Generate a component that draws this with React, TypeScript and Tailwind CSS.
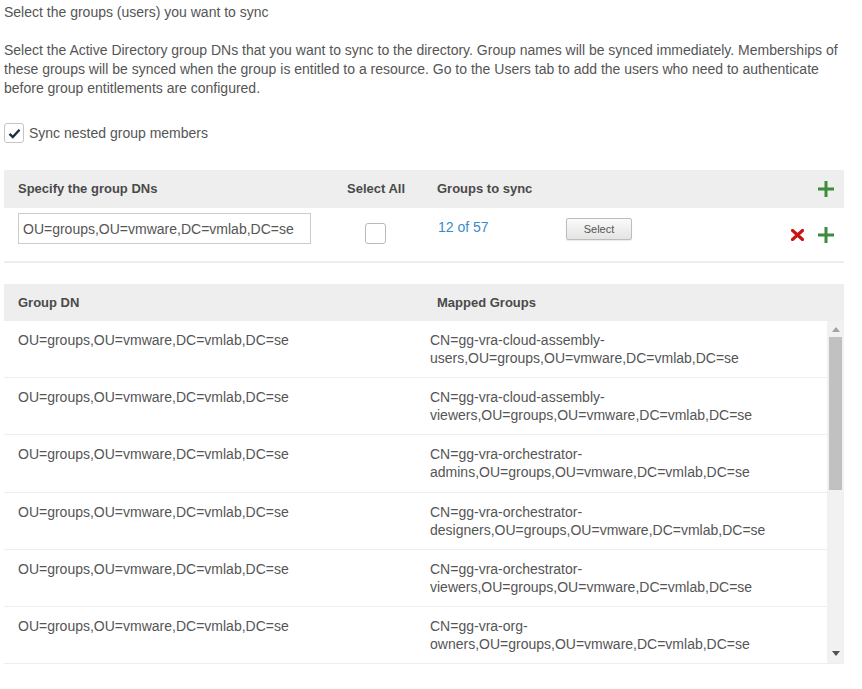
const rows = [
  ["CN=gg-vra-cloud-assembly-", "users,OU=groups,OU=vmware,DC=vmlab,DC=se"],
  ["CN=gg-vra-cloud-assembly-", "viewers,OU=groups,OU=vmware,DC=vmlab,DC=se"],
  ["CN=gg-vra-orchestrator-", "admins,OU=groups,OU=vmware,DC=vmlab,DC=se"],
  ["CN=gg-vra-orchestrator-", "designers,OU=groups,OU=vmware,DC=vmlab,DC=se"],
  ["CN=gg-vra-orchestrator-", "viewers,OU=groups,OU=vmware,DC=vmlab,DC=se"],
  ["CN=gg-vra-org-", "owners,OU=groups,OU=vmware,DC=vmlab,DC=se"],
];

const DN = "OU=groups,OU=vmware,DC=vmlab,DC=se";

function PlusIcon() {
  return (
    <svg width="16" height="16" viewBox="0 0 16 16" className="block">
      <rect x="6.5" y="0" width="3" height="16" fill="#3d8b3d" />
      <rect x="0" y="6.5" width="16" height="3" fill="#3d8b3d" />
    </svg>
  );
}

function CrossIcon() {
  return (
    <svg width="13" height="12" viewBox="0 0 13 12" className="block">
      <path d="M1.5 1.5 L11.5 10.5 M11.5 1.5 L1.5 10.5" stroke="#c81414" strokeWidth="3.2" strokeLinecap="square" />
    </svg>
  );
}

export default function App() {
  return (
    <div
      className="w-[862px] h-[689px] bg-white text-[14px] text-[#555] overflow-hidden"
      style={{ fontFamily: '"Liberation Sans", Arial, sans-serif' }}
    >
      <div className="w-[840px] ml-[4px] pt-[2px]">
        <p className="leading-[20px]">Select the groups (users) you want to sync</p>

        <p className="mt-[19px] leading-[19px]">
          Select the Active Directory group DNs that you want to sync to the directory. Group names will be synced immediately. Memberships of
          <br />
          these groups will be synced when the group is entitled to a resource. Go to the Users tab to add the users who need to authenticate
          <br />
          before group entitlements are configured.
        </p>

        <label className="mt-[25px] flex items-center gap-[5px] h-[20px]">
          <span className="w-[20px] h-[20px] rounded-[3px] border border-[#c4c4c4] bg-white flex items-center justify-center">
            <svg width="13" height="11" viewBox="0 0 13 11">
              <path d="M1.5 5.8 L4.8 9 L11.5 1.8" fill="none" stroke="#1e2d3f" strokeWidth="2.4" />
            </svg>
          </span>
          <span className="leading-[20px]">Sync nested group members</span>
        </label>

        {/* group DN editor */}
        <div className="mt-[27px] h-[38px] bg-[#eeeeee] flex items-center pl-[14px] pr-[10px] pb-[1px] text-[13px] font-bold text-[#4a4a4a]">
          <div className="w-[329px]">Specify the group DNs</div>
          <div className="w-[90px]">Select All</div>
          <div className="flex-1">Groups to sync</div>
          <PlusIcon />
        </div>
        <div className="h-[55px] flex items-start pl-[14px] pr-[10px] border-b-2 border-[#eeeeee]">
          <div className="w-[329px] pt-[5px]">
            <input
              readOnly
              value={DN}
              className="w-[293px] h-[31px] border border-[#cccccc] px-[4px] text-[14px] text-[#555] outline-none"
              style={{ fontFamily: '"Liberation Sans", Arial, sans-serif' }}
            />
          </div>
          <div className="w-[90px] pt-[15px] pl-[18px]">
            <span className="block w-[21px] h-[21px] rounded-[3px] border border-[#b9b9b9] bg-white" />
          </div>
          <div className="w-[129px] pt-[10px] pl-[1px] text-[#3a8bcb] leading-[18px]">12 of 57</div>
          <div className="pt-[10px]">
            <button className="w-[66px] h-[22px] rounded-[2px] border border-[#bdbdbd] bg-gradient-to-b from-[#fafafa] to-[#e4e4e4] text-[11px] text-[#555] shadow-[0_1px_1px_rgba(0,0,0,0.08)]">
              Select
            </button>
          </div>
          <div className="flex-1" />
          <div className="pt-[19px] flex items-center gap-[14px]">
            <CrossIcon />
            <PlusIcon />
          </div>
        </div>

        {/* mapped groups table */}
        <div className="mt-[21px] h-[37px] bg-[#eeeeee] flex items-center pl-[14px] text-[13px] font-bold text-[#4a4a4a]">
          <div className="w-[419px]">Group DN</div>
          <div>Mapped Groups</div>
        </div>
        <div className="flex h-[343px] border-b border-[#eeeeee] overflow-hidden">
          <div className="flex-1">
            {rows.map((r, i) => (
              <div key={i} className="h-[57.2px] flex border-b border-[#eeeeee] pt-[10px] leading-[18px]">
                <div className="w-[426px] pl-[14px]">{DN}</div>
                <div>
                  {r[0]}
                  <br />
                  {r[1]}
                </div>
              </div>
            ))}
          </div>
          <div className="w-[17px] bg-[#f1f1f1] flex flex-col items-center">
            <div className="h-[16px] flex items-center justify-center">
              <svg width="8" height="5" viewBox="0 0 8 5">
                <path d="M0 5 L4 0 L8 5 Z" fill="#a3a3a3" />
              </svg>
            </div>
            <div className="w-[13px] h-[153px] bg-[#c1c1c1]" />
            <div className="flex-1" />
            <div className="h-[16px] flex items-center justify-center mb-[2px]">
              <svg width="8" height="5" viewBox="0 0 8 5">
                <path d="M0 0 L8 0 L4 5 Z" fill="#505050" />
              </svg>
            </div>
          </div>
        </div>
      </div>
    </div>
  );
}
